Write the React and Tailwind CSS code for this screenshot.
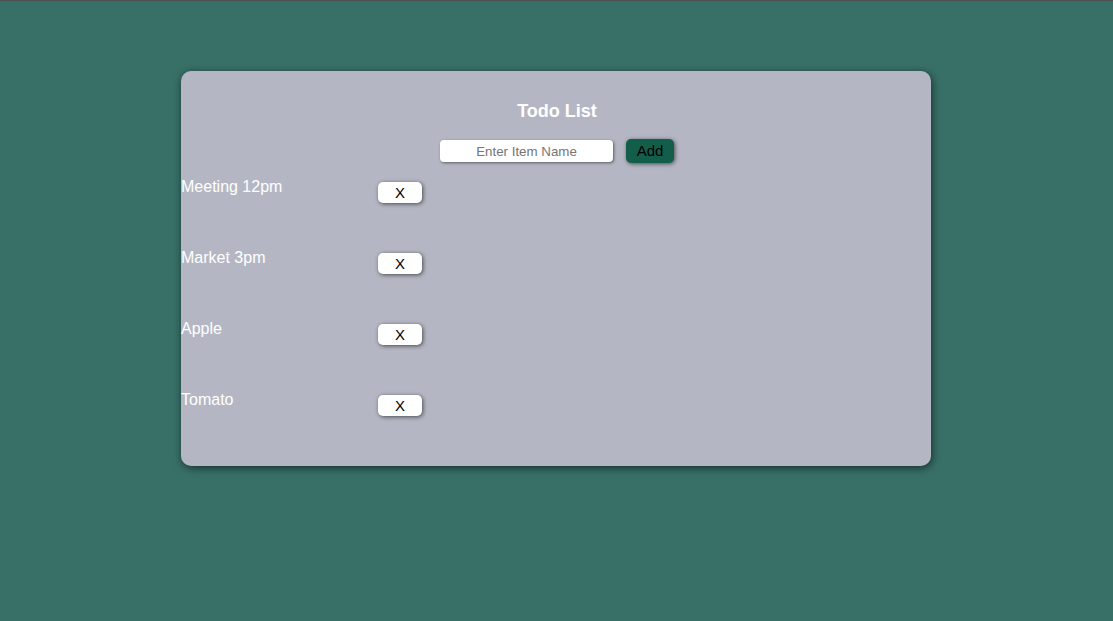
import React, { useState } from "react";

const App = () => {
    const [items, setItems] = useState(["Meeting 12pm", "Market 3pm", "Apple", "Tomato"]);
    const [text, setText] = useState("");

    const addItem = () => {
        if (!text.trim()) return;
        setItems([...items, text]);
        setText("");
    };

    return (
        <div className="min-h-screen bg-[#387068] border-t border-[#505050] pt-[70px] font-['Liberation_Sans',Arial,sans-serif]">

            {/* Card */}
            <div className="ml-[181px] w-[750px] rounded-[10px] bg-[#b4b7c3] pt-[26px] pb-[7px] shadow-[1px_2px_8px_rgba(0,0,0,0.6)]">
                <h1 className="pl-[2px] text-center text-[18px] font-bold leading-[28px] text-white">
                    Todo List
                </h1>

                {/* Input row */}
                <div className="mt-[14px] flex items-center justify-center gap-[13px] pl-[2px]">
                    <input
                        value={text}
                        onChange={(e) => setText(e.target.value)}
                        placeholder="Enter Item Name"
                        className="h-[22px] w-[173px] rounded-[4px] bg-white text-center text-[13.33px] text-black shadow-[1px_1px_3px_rgba(0,0,0,0.5)] outline-none placeholder:text-[#757575]"
                    />
                    <button
                        onClick={addItem}
                        className="h-[24px] w-[48px] rounded-[5px] bg-[#135e4b] text-[15px] text-black shadow-[1px_1px_4px_rgba(0,0,0,0.6)]"
                    >
                        Add
                    </button>
                </div>

                {/* Items */}
                <ul className="mt-[12px]">
                    {items.map((item, i) => (
                        <li key={i} className="flex h-[71px] items-start">
                            <span className="w-[197px] text-[16px] leading-6 text-white">{item}</span>
                            <button
                                onClick={() => setItems(items.filter((_, j) => j !== i))}
                                className="mt-[7px] h-[21px] w-[44px] rounded-[5px] bg-white text-[15px] leading-none text-black shadow-[1px_1px_4px_rgba(0,0,0,0.6)]"
                            >
                                X
                            </button>
                        </li>
                    ))}
                </ul>
            </div>

        </div>
    );
};

export default App;
